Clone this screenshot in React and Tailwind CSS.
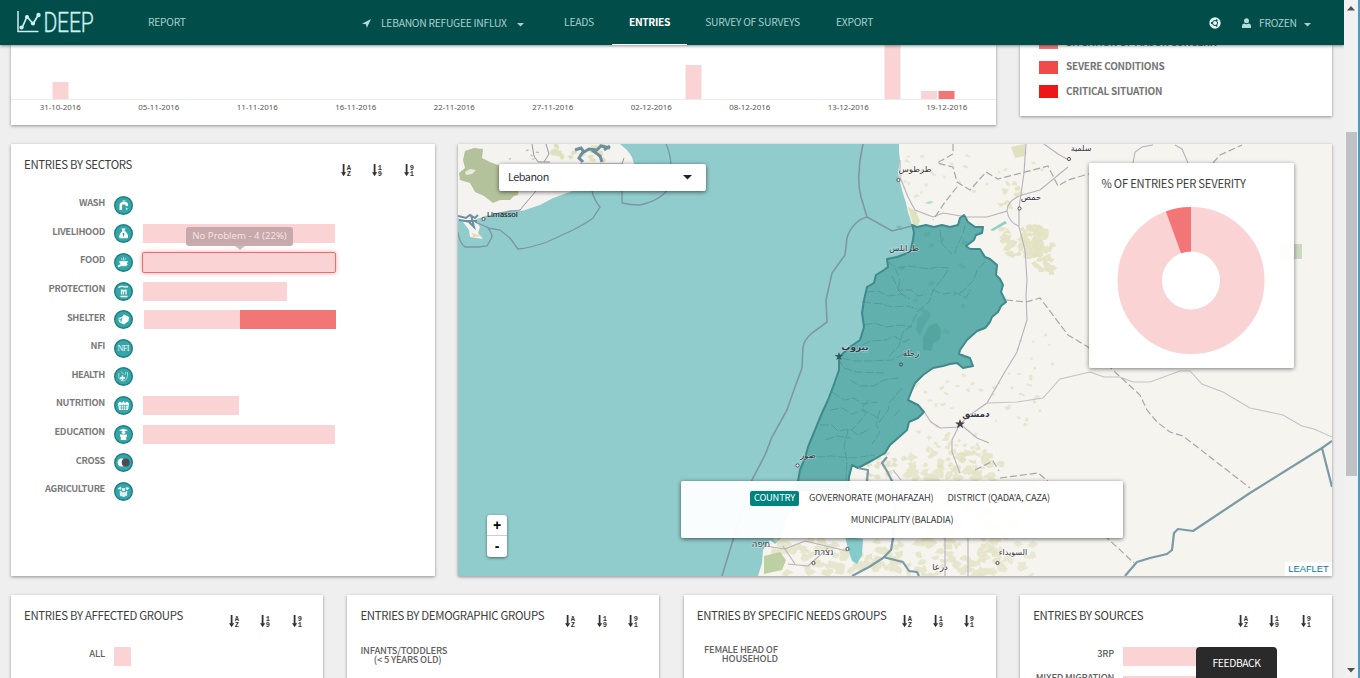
import React from "react";

const PINK = "#fad4d4";
const RED = "#f37676";

function Caret({ className = "" }) {
  return (
    <svg className={className} width="7" height="4" viewBox="0 0 7 4">
      <path d="M0 0h7L3.5 3.6z" fill="currentColor" />
    </svg>
  );
}

function Header() {
  return (
    <header className="relative z-20 flex h-[45px] shrink-0 bg-[#004d4a] text-[10.300px] leading-[43px] tracking-[-0.260px] whitespace-nowrap text-[#a9d0ce] shadow-[0_1px_3px_rgba(0,0,0,0.45)]">
      <div className="w-[148px] shrink-0">
        <svg width="148" height="44" viewBox="0 0 148 44">
          <path d="M18 11v20.5h20.5" fill="none" stroke="#cdf0f0" strokeWidth="1.5" />
          <path d="M22 28l5-11.500 6 7.200 5.500-9" fill="none" stroke="#cdf0f0" strokeWidth="1.700" />
          <circle cx="21.500" cy="27.500" r="2.100" fill="#cdf0f0" />
          <circle cx="27" cy="17" r="2.100" fill="#cdf0f0" />
          <circle cx="33" cy="23.500" r="2.100" fill="#cdf0f0" />
          <circle cx="38.500" cy="15" r="2.200" fill="#cdf0f0" />
          <text x="43.500" y="31.800" fontSize="27" textLength="50" lengthAdjust="spacingAndGlyphs" fill="#cdf0f0" stroke="#cdf0f0" strokeWidth=".35" className="font-['Roboto','Liberation_Sans',sans-serif] font-light">
            DEEP
          </text>
        </svg>
      </div>
      <div className="w-[214px] shrink-0">REPORT</div>
      <div className="flex h-[45px] w-[184px] shrink-0 items-center">
        <svg width="9" height="9" viewBox="0 0 9 9" className="mt-[1px] mr-[10px]">
          <path d="M9 0L0 4.800l4 .4L4.800 9z" fill="#b5dcda" />
        </svg>
        <span className="w-[136px]">LEBANON REFUGEE INFLUX</span>
        <Caret className="mt-[4px]" />
      </div>
      <div className="w-[66px] shrink-0 text-center">LEADS</div>
      <div className="h-[45px] w-[75px] shrink-0 border-b border-white text-center font-bold tracking-[-0.400px] text-white">ENTRIES</div>
      <div className="w-[131px] shrink-0 text-center">SURVEY OF SURVEYS</div>
      <div className="w-[73px] shrink-0 text-center">EXPORT</div>
      <div className="flex-1" />
      <div className="flex h-[45px] w-[135px] shrink-0 items-center">
        <svg width="12" height="12" viewBox="0 0 12 12" className="mt-[1px] mr-[21px]">
          <circle cx="6" cy="6" r="5.700" fill="#e4f4f3" />
          <circle cx="6" cy="6" r="2.500" fill="none" stroke="#004d4a" strokeWidth="1" />
          <circle cx="2.700" cy="6" r=".9" fill="#004d4a" />
          <circle cx="7.700" cy="3.200" r=".9" fill="#004d4a" />
          <circle cx="7.700" cy="8.800" r=".9" fill="#004d4a" />
        </svg>
        <svg width="9" height="10" viewBox="0 0 9 10" className="mt-[1px] mr-[8px]">
          <circle cx="4.500" cy="2.700" r="2.500" fill="#b5dcda" />
          <path d="M0 10V8q0-2.300 2.200-2.600Q4.500 7 6.800 5.400 9 5.700 9 8v2z" fill="#b5dcda" />
        </svg>
        <span className="w-[45px]">FROZEN</span>
        <Caret className="mt-[4px]" />
      </div>
    </header>
  );
}

const dates = ["31-10-2016", "05-11-2016", "11-11-2016", "16-11-2016", "22-11-2016", "27-11-2016", "02-12-2016", "08-12-2016", "13-12-2016", "19-12-2016"];

const cardShadow = "bg-white shadow-[0_1px_3px_rgba(0,0,0,0.4)]";

function Timeline() {
  return (
    <section className={"h-[80px] w-[985px] " + cardShadow}>
      <svg width="985" height="55" viewBox="11 45 985 55" className="block">
        <rect x="11" y="99" width="985" height="1" fill="#ebebeb" />
        <rect x="52.500" y="82" width="16" height="17" fill={PINK} />
        <rect x="685.500" y="65" width="16" height="34" fill={PINK} />
        <rect x="884.500" y="40" width="16" height="59" fill={PINK} />
        <rect x="921" y="91" width="16" height="8" fill={PINK} />
        <rect x="938.500" y="91" width="16" height="8" fill={RED} />
      </svg>
      <div className="grid grid-cols-10 text-center font-['Noto_Sans',sans-serif] text-[7.900px] leading-[14px] text-[#555]">
        {dates.map((d) => (
          <span key={d}>{d}</span>
        ))}
      </div>
    </section>
  );
}

function Legend() {
  const rows = [
    ["SITUATION OF MAJOR CONCERN", "bg-[#f37676]"],
    ["SEVERE CONDITIONS", "bg-[#f14a4a]"],
    ["CRITICAL SITUATION", "bg-[#ec1717]"],
  ];
  return (
    <section className={"h-[71px] w-[312px] " + cardShadow}>
      <div className="-mt-[14px] flex flex-col pl-[19px]">
        {rows.map(([t, c]) => (
          <div key={t} className="flex h-[24.300px] items-center">
            <span className={"mr-[8px] h-[12.500px] w-[19px] " + c} />
            <span className="-mt-[2px] text-[10px] leading-[14px] font-bold tracking-[-0.250px] text-[#757575]">{t}</span>
          </div>
        ))}
      </div>
    </section>
  );
}

function SortIcon({ a, b }) {
  return (
    <svg width="11" height="13" viewBox="0 0 11 13">
      <path d="M2.600 0v10" stroke="#333" strokeWidth="1.800" />
      <path d="M0 8.300h5.200L2.600 12.300z" fill="#333" />
      <text x="5.800" y="5.500" fontSize="7" fill="#333" className="font-['Liberation_Mono',monospace] font-bold">{a}</text>
      <text x="5.800" y="12" fontSize="7" fill="#333" className="font-['Liberation_Mono',monospace] font-bold">{b}</text>
    </svg>
  );
}

function CardHead({ title }) {
  return (
    <div className="flex justify-between pr-[20.500px] pl-[13px]">
      <h2 className="mt-[10.500px] text-[11.400px] leading-[18px] tracking-[-0.310px] whitespace-nowrap text-[#3c3c3c]">{title}</h2>
      <div className="mt-[20px] flex gap-[20.300px]">
        <SortIcon a="A" b="Z" />
        <SortIcon a="1" b="9" />
        <SortIcon a="9" b="1" />
      </div>
    </div>
  );
}

const glyphs = {
  WASH: <path d="M5.500 14V9.500Q5.500 6 9 6h2.500q2.500 0 2.500 3v1h-2.500V8.500H9q-1 0-1 1V14zM8.500 4.500h3v1h-3zM12.800 11.300q1.500 2 0 3-1.500-1 0-3" fill="#fff" />,
  LIVELIHOOD: (
    <g>
      <path d="M7.500 4.500h4l-.8 2.200h-2.400zM8.200 7h2.800q3.500 3.500 3 6.200-.2 1-1.200 1H6.400q-1 0-1.200-1Q5 10.500 8.200 7z" fill="#fff" />
      <path d="M9.500 9v3.500M8.500 10h2" stroke="#279a9b" strokeWidth=".9" />
    </g>
  ),
  FOOD: <path d="M5.500 8.500h8q-.3 2.500-2.500 3h2.500l-1.500 1.300H7L4.500 14l-.5-1 3-2Q5.700 10 5.500 8.500zM7.500 5l.7 2.500M9.500 4v3.500M11.500 5l-.7 2.500" fill="#fff" stroke="#fff" strokeWidth=".6" />,
  PROTECTION: <path d="M4.500 5.500q3-2 6-.6h3.500M6.500 14.500h7M7.500 7.500v5M9.500 8.500v4M12 7.500v5M7 8.500h5.500" fill="none" stroke="#fff" strokeWidth="1.300" />,
  SHELTER: (
    <g>
      <path d="M4.500 8l3.500-1 2-2.500 5 2.500-.5 4-4.500 3.500-5-2.500z" fill="#fff" />
      <path d="M5 8.800l2.200 1.200-.5 2M8 7.500l-1 3" stroke="#279a9b" strokeWidth=".8" fill="none" />
    </g>
  ),
  NFI: <text x="9.500" y="12.300" fontSize="8" textLength="12" textAnchor="middle" fill="#fff" className="font-['Liberation_Serif',serif]">NFI</text>,
  HEALTH: (
    <g fill="none" stroke="#fff">
      <path d="M5 6q-.5 3 0 5 1.500 3.500 5 3 3.500-1.500 3.500-5.500V5" strokeWidth=".8" opacity=".7" />
      <path d="M8.500 8.500v5M6 11h5" strokeWidth="1.700" />
      <path d="M7 4.500L9.500 7M12 5l-1 3" strokeWidth=".8" opacity=".7" />
    </g>
  ),
  NUTRITION: (
    <g>
      <path d="M4 7.500l2-2 2 1.500 1.500-2 1.500 2 2-1.500 2 2-1 6.500H5z" fill="#fff" />
      <path d="M5 9.700h9M5.500 12h8M7.600 8.500V14M9.600 8.500V14M11.600 8.500V14" stroke="#279a9b" strokeWidth=".6" />
    </g>
  ),
  EDUCATION: <path d="M5 5.200L9.500 3.700 14 5.200 9.500 6.800zM7.700 6.800h3.600v1.500q-1.800 1.500-3.600 0zM6 9.500h7v2.200h-.8V15H6.800v-3.300H6z" fill="#fff" />,
  CROSS: (
    <g>
      <circle cx="7.700" cy="9.500" r="4" fill="#fff" />
      <circle cx="11.700" cy="9.500" r="4" fill="#4c4c52" />
    </g>
  ),
  AGRICULTURE: <path d="M4 6.500L7 5l-.5 2.500zM8 6.500h3L10.500 9h-2zM12 5.500l3 .5-2 2zM6 9l1.800 1v4H6.500zM13 9l-1.500 1v4h1zM8.500 10.500h2.200v4H8.500z" fill="#fff" stroke="#fff" strokeWidth=".5" />,
};

function SectorIcon({ name }) {
  return (
    <svg width="19" height="19" viewBox="0 0 19 19" className="mr-[10px] ml-[9px] shrink-0">
      <circle cx="9.500" cy="9.500" r="8.800" fill="#35a5a7" stroke="#187f82" strokeWidth="1.400" />
      {glyphs[name]}
    </svg>
  );
}

const sectors = [
  ["WASH", 0, 0],
  ["LIVELIHOOD", 192, 0],
  ["FOOD", 192, 0],
  ["PROTECTION", 144, 0],
  ["SHELTER", 96, 96],
  ["NFI", 0, 0],
  ["HEALTH", 0, 0],
  ["NUTRITION", 96, 0],
  ["EDUCATION", 192, 0],
  ["CROSS", 0, 0],
  ["AGRICULTURE", 0, 0],
];

function Sectors() {
  return (
    <section className={"h-[432px] w-[424px] " + cardShadow}>
      <CardHead title="ENTRIES BY SECTORS" />
      <div className="mt-[14px] flex flex-col">
        {sectors.map(([n, a, b]) => (
          <div key={n} className="flex h-[28.600px] items-center">
            <span className="-mt-[6px] w-[94px] text-right text-[9.300px] leading-[14px] font-bold tracking-[-0.350px] text-[#7a7a7a]">{n}</span>
            <SectorIcon name={n} />
            <div className={"relative flex h-[19px] " + (b ? "ml-[1px] " : "") + (n === "FOOD" ? "rounded-[1px] shadow-[0_0_5px_1px_#f9a5a5] outline-[1.500px] outline-[#ee6d6d]" : "")}>
              <span className="bg-[#fad4d4]" style={{ width: a }} />
              <span className="bg-[#f37676]" style={{ width: b }} />
              {n === "FOOD" && (
                <div className="absolute -top-[26px] left-[43px] z-10 h-[19px] w-[107px] rounded-[3px] bg-[#c4a7a9]/95 text-center font-['Noto_Sans',sans-serif] text-[9.600px] leading-[18px] whitespace-nowrap text-[#f6e3e3]">
                  No Problem - 4 (22%)
                  <svg width="10" height="5" viewBox="0 0 10 5" className="absolute top-[19px] left-[49px]">
                    <path d="M0 0h10L5 4z" fill="#c9b9bf" />
                  </svg>
                </div>
              )}
            </div>
          </div>
        ))}
      </div>
    </section>
  );
}

function scatter(seed, n, x0, y0, w, h, size) {
  let s = seed;
  const r = () => {
    s = (s * 16807) % 2147483647;
    return s / 2147483647;
  };
  let d = "";
  for (let i = 0; i < n; i++) {
    const cx = x0 + r() * w;
    const cy = y0 + r() * h;
    const k = 7;
    for (let j = 0; j < k; j++) {
      const t = (j / k) * Math.PI * 2;
      const q = size * (0.3 + r());
      d += (j ? "L" : "M") + (cx + Math.cos(t) * q * 1.3).toFixed(1) + " " + (cy + Math.sin(t) * q).toFixed(1);
    }
    d += "z";
  }
  return d;
}

const COAST =
  "M899 144L899 152 900 160 898 173 902 190 906 203 908 212 912 225 914 232 913 240 910 252 897 257 887 259 888 267 884 270 876 275 874 283 867 287 864 300 862 313 864 327 860 340 850 347 839 357 839 370 833 387 828 400 822 413 815 430 808 447 805 458 800 470 798 481 792 505 785 525 781 538 775 544 770 540 763 550 762 563 758 576H1332V144z";
const LEBANON =
  "M912 225L917 227 926 225 934 227 942 225 950 227 958 225 960 218 964 215 968 222 975 227 983 227 982 233 976 235 974 240 966 246 970 249 980 249 985 257 990 259 997 265 996 275 1000 279 1003 285 1001 292 1006 302 1001 306 998 312 992 317 990 322 985 328 977 331 967 340 960 350 959 354 970 358 973 366 963 368 957 363 950 364 943 366 933 368 923 375 915 383 912 390 908 400 918 405 924 412 918 418 909 422 907 430 898 438 890 445 885 453 873 460 858 468 852 465 849 477 848 490 797 490 798 481 800 470 805 458 808 447 815 430 822 413 828 400 833 387 839 370 839 357 850 347 860 340 864 327 862 313 864 300 867 287 874 283 876 275 884 270 888 267 887 259 897 257 910 252 913 240 914 232z";

const places = [
  ["طرطوس", 915, 171.5, 8.5, 0],
  ["حمص", 1031, 200, 8.5, 0],
  ["طرابلس", 904, 251, 8.5, 0],
  ["بيروت", 855, 350, 9, 1],
  ["زحلة", 911, 356, 8.5, 0],
  ["دمشق", 976, 416.5, 9, 1],
  ["صور", 808, 458, 8.5, 0],
  ["سلمية", 1081, 151, 8, 0],
  ["السويداء", 1013, 555, 8, 0],
  ["درعا", 940, 570, 8.5, 0],
  ["נצרת", 824, 555, 8.5, 0],
  ["חיפה", 761, 547, 8.5, 0],
];

function MapDrawing() {
  return (
    <svg width="874" height="432" viewBox="458 144 874 432" className="block">
      <rect x="458" y="144" width="874" height="432" fill="#90cccb" />
      <path d={COAST} fill="#f5f4ef" />
      <path d="M458 144H620L627 150 632 157 634 164 620 175 567 193 553 198 540 205 522 211 510 210 500 213 485 216 475 220 480 227 478 233 483 239 470 237 469 230 463 222 458 218z" fill="#f5f3ef" />
      <path d="M465 151L474 148 483 149 482 158 490 162 498 165H522L518 195 514 196 510 200 500 200 493 203 484 196 475 192 470 183 460 180 459 173 465 168 463 160z" fill="#b4c29b" />
      <path d="M465 172l5-3 6 1-4 4-6 1z" fill="#e9ebdd" />
      <path d={scatter(41, 14, 555, 146, 50, 16, 3.2)} fill="#dcdfb9" opacity=".9" />
      <path d={scatter(7, 5, 510, 146, 40, 14, 1.2)} fill="#a9cda5" />
      <path d="M575 150l6-2 3 4 5-3 8 1 4-4 9 2M583 152l-4 6 4 4M592 150l8 6 2 6M610 146l-6 4" fill="none" stroke="#6c8f9b" strokeWidth="3" />
      <path d="M532 144l2 12 4 6 12 0M546 144l3 10-5 8M498 213l22-3 10-12 6-7M580 164l42 0 2-6" fill="none" stroke="#9a93a3" strokeWidth="1" />
      <path d="M458 216l8 2 4-3 5 3 3-3M471 215l3 12-6-6 9 0M459 220l12 2" fill="none" stroke="#6c8fa0" strokeWidth="2" />
      <path d="M472 233l10 3-9 1z" fill="#efd9b5" />
      <path d="M592 191Q594 200 600 207L593 218Q585 224 573 230L547 242Q530 248 518 249L510 238 500 230 488 228Q492 233 492 237L487 246 478 247H465Q459 242 458 232M475 222l14 6M666 144Q671 155 671 167 671 185 665 193 655 202 640 205 630 205 622 203V190" fill="none" stroke="#7d95a4" strokeWidth="1.300" />

      <path d={scatter(11, 150, 900, 452, 102, 124, 4.2)} fill="#e0dfbe" opacity=".7" />
      <path d={scatter(67, 40, 925, 432, 60, 40, 2.5)} fill="#e0dfbe" opacity=".7" />
      <path d={scatter(23, 100, 775, 538, 125, 36, 4)} fill="#dfe0bf" opacity=".7" />
      <path d={scatter(29, 45, 985, 480, 50, 96, 4)} fill="#e5e4c8" opacity=".75" />
      <path d={scatter(31, 34, 1003, 226, 36, 32, 4)} fill="#e2e1bf" opacity=".85" />
      <path d={scatter(33, 34, 1026, 228, 26, 44, 4)} fill="#e2e1bf" opacity=".85" />
      <path d={scatter(37, 12, 1000, 178, 26, 30, 2.6)} fill="#e2e1bf" opacity=".85" />
      <path d={scatter(43, 26, 905, 148, 140, 50, 2)} fill="#dfe3c9" opacity=".75" />
      <path d={scatter(47, 34, 915, 375, 125, 60, 2)} fill="#e0e2c6" opacity=".75" />
      <path d={scatter(53, 16, 868, 452, 30, 28, 3)} fill="#dce0be" opacity=".8" />
      <path d={scatter(59, 16, 1000, 330, 60, 70, 1.5)} fill="#e4e4d6" />
      <path d="M1011 147l14-3v12l-10 2zM908 207l8 4 4 10-2 4-5 0z" fill="#e2e1bf" />
      <path d="M764 556l16-4 6 8-4 10-18 4z" fill="#bdd0a4" />
      <path d="M990 230l15-9 2 2-14 8z" fill="#8fcfc9" />
      <path d="M925 203l5-2 4 1-5 2z" fill="#a9dcc9" />
      <rect x="1280" y="244" width="22" height="15" fill="#ccd8c2" />

      <g fill="none" stroke="#b9b0bd" strokeWidth="1.100">
        <path d="M1026 144L1024 173 1019 208 1019 227 1025 250 1027 280 1026 295 1027 320 1017 352 1003 375 987 403 970 415 960 424 952 440 952 452 960 473" />
        <path d="M900 160l0 17 8 20 7 13 18 7 10-4 24 4 20 0 20-6Q1007 200 1022 195L1040 190 1068 167M1007 211q2 12 12 15M960 424l17 14 12 5M960 427l-20 1-9-6-6-9M1044 144l14 10 9 5" />
        <path d="M987 403l30-1 26-4 17-19 30-7 14 5 16 0 13 5h17l30-11h10l12 13 21 8 27 16 33 7 19 11 12 3 18 8" stroke="#c5c2c4" />
        <path d="M1133 163L1135 152 1142 147 1153 145M1175 145l7 4 6 14" />
        <path d="M765 546l20 3 20-8 42 10M783 546l12 18M828 548l-20 18-20-2M893 470l8 10M945 538v38M968 538v38" />
      </g>
      <g fill="none" stroke="#aaa7a8" strokeWidth="1.200" strokeDasharray="7 3">
        <path d="M953 144v10l-16 9 16 4 4 15 13 8 16-18 12 7 50-13 10 20 10-6 24-7M957 187l-12 15-12 18M1006 300l20 2 14-4 28 37 20 12 27 25 25 23 7 15 10 12 13 10 13 4 67 52M1213 163l7-8 22-10M1000 478l38-5 10 8M1104 535l30 28M975 470l18-9 6 10" />
      </g>

      <path d={LEBANON} fill="#62b0ad" />
      <g fill="none" stroke="#468f92" strokeWidth=".8" opacity=".75" strokeDasharray="9 2">
        <path d="M888 262l9 6 12-2 20 3 8-2 12 1-6 10-10 12-4 12-12 10-6 14-8 6-4 14-10 10M965 225l-2 9-6 12-3 10M892 276l4 8 3 6 12 0 7 6 8-2M866 292l12-1 10 5 14-2 8 5M862 302l20 2 10 3 16-1 9 3M864 325l10-2 12 4 14-2 12 2M862 345l10-4 14-1 8-4 10 6 6-3M842 358l12 3 14 0 24-1 20-10M838 358l6 10 12 4 28 1M895 268l5 12-2 10 8 8M985 262l-8 8-3 10-12 12-9 3M932 290l12 4 10-2 12 6 4-8M940 230l2 14 10 10M850 380l10 6 14 0 10-6 14-2M832 392l12 8 10-2 8 6 16-2M830 410l12-2 10 6 12-4 14 8M820 425l12 0 6 6 12-2 8 6 12-6M805 455l16 2 10-1 22 2 22-3M848 430l-4 16 3 14-1 20M825 440l12-4 14 2M868 400l-6 8 4 6-14 16M880 410l-4 14 4 8-8 12M902 388l-12 14-2 8-10 14M900 410l-8 8" />
      </g>
      <path d={scatter(61, 12, 900, 225, 70, 110, 3)} fill="#4b9d98" opacity=".35" />
      <path d="M929 326l8-3 4 7-1 9-6 4-3 8-8-1 0-12z" fill="#44978e" opacity=".45" />
      <path d="M918 318l10-8 3 6-6 8-5 12-4-6z" fill="#44978e" opacity=".35" />
      <path d={LEBANON} fill="none" stroke="#3f8a8d" strokeWidth="2" strokeLinejoin="round" />
      <path d="M863 144L860 160 859 173Q858 185 861 197L867 217 892 231 912 226M867 217Q860 219 856 223 849 230 847 238L845 255 832 273 826 300 827 322 812 333Q804 340 803 347L802 368 795 387 787 410 772 437 765 455 752 480 733 540 722 576" fill="none" stroke="#7f97a5" strokeWidth="1.600" />
      <g fill="none" stroke="#7a9ba5" strokeWidth="2.200" strokeLinejoin="round">
        <path d="M1125 576L1137 562 1150 558 1167 554 1172 550 1174 533 1178 529 1193 531 1250 493 1322 448 1332 441M1322 448l10 39" />
        <path d="M887 457l-5 6 5 8 5 10 3 30-2 27-2 12-8 8-14 9-17 9M883 557l20 5 6 9 8 1 2 4M858 468l10 2-1 11" />
      </g>
      <path d="M845 536l18 3-1 16-5 9-5-3-4-12z" fill="#86cbcb" />

      <g fill="#f5f4ef" stroke="#55505c" strokeWidth="1">
        <circle cx="898.500" cy="180" r="1.600" />
        <circle cx="1019.500" cy="208.500" r="1.600" />
        <circle cx="1069" cy="159" r="1.600" />
        <circle cx="797.500" cy="465.500" r="1.600" />
        <circle cx="813.500" cy="563" r="1.600" />
        <circle cx="847.500" cy="549" r="1.600" />
        <circle cx="997.500" cy="563" r="1.600" />
        <circle cx="483.500" cy="219" r="1.600" />
        <circle cx="901" cy="364.500" r="1.600" fill="none" />
      </g>
      <path d="M960 419l1.300 3.500h3.700l-3 2.200 1.200 3.600-3.200-2.200-3.200 2.200 1.200-3.600-3-2.200h3.700z" fill="#444" />
      <path d="M839 352l1.100 3.100h3.200l-2.600 1.900 1 3.100-2.700-1.900-2.700 1.900 1-3.100-2.600-1.900h3.200z" fill="#37575c" />
      <g fill="#3b3744" textAnchor="middle" className="font-['DejaVu_Sans',sans-serif]">
        {places.map(([t, x, y, s, b]) => (
          <text key={t} x={x} y={y} fontSize={s} fontWeight={b ? 700 : 400} stroke="#ffffff" strokeOpacity=".35" strokeWidth="1.500" paintOrder="stroke">
            {t}
          </text>
        ))}
      </g>
      <text x="487" y="217" fontSize="7.500" fill="#222" stroke="#222" strokeWidth=".15" className="font-['Noto_Sans',sans-serif]">Limassol</text>
    </svg>
  );
}

function MapCard() {
  return (
    <section className={"relative h-[432px] w-[874px] " + cardShadow}>
      <MapDrawing />
      <div className="absolute top-[19.500px] left-[40.500px] flex h-[27px] w-[207px] items-center justify-between rounded-[2px] bg-white pr-[14px] pl-[9.500px] text-[10.800px] leading-[20px] tracking-[-0.450px] text-[#333] shadow-[0_1px_4px_rgba(0,0,0,0.6)]">
        <span className="-mt-[2px]">Lebanon</span>
        <svg width="9" height="5" viewBox="0 0 9 5">
          <path d="M0 0h9L4.500 4.500z" fill="#222" />
        </svg>
      </div>
      <div className="absolute top-[19px] left-[631px] h-[205px] w-[205px] rounded-[2px] bg-white/95 shadow-[0_1px_4px_rgba(0,0,0,0.5)]">
        <h2 className="mt-[10.500px] pl-[12.500px] text-[11.200px] leading-[18px] tracking-[-0.220px] whitespace-nowrap text-[#3c3c3c]">% OF ENTRIES PER SEVERITY</h2>
        <svg width="205" height="150" viewBox="0 0 205 150" className="mt-[13.500px] block">
          <circle cx="102" cy="75.500" r="51.250" fill="none" stroke={PINK} strokeWidth="44.500" />
          <path d="M102 2A73.500 73.500 0 0 0 76.860 6.430L92.080 48.250A29 29 0 0 1 102 46.500z" fill={RED} />
        </svg>
      </div>
      <div className="absolute top-[371px] left-[29px] flex h-[42px] w-[20px] flex-col rounded-[3px] bg-white text-center font-['Liberation_Sans',sans-serif] text-[14px] leading-[21px] font-bold text-black shadow-[0_1px_3px_rgba(0,0,0,0.5)]">
        <span className="h-[21px] border-b border-[#ccc]">+</span>
        <span className="h-[21px]">-</span>
      </div>
      <div className="absolute top-[337px] left-[223px] flex h-[57px] w-[442px] flex-wrap content-start justify-center gap-x-[6px] gap-y-[7px] rounded-[2px] bg-white/95 px-[60px] pt-[10px] text-[9.300px] leading-[15px] tracking-[-0.200px] text-[#3c3c3c] shadow-[0_1px_4px_rgba(0,0,0,0.6)]">
        <span className="h-[15px] rounded-[2px] bg-[#00837f] px-[4px] leading-[13px] text-white">COUNTRY</span>
        <span className="h-[15px] px-[4px] leading-[13px]">GOVERNORATE (MOHAFAZAH)</span>
        <span className="h-[15px] px-[4px] leading-[13px]">DISTRICT (QADA'A, CAZA)</span>
        <span className="h-[15px] px-[4px] leading-[13px]">MUNICIPALITY (BALADIA)</span>
      </div>
      <div className="absolute right-0 bottom-0 h-[14px] w-[47px] bg-white/80 text-center font-['Liberation_Sans',sans-serif] text-[9.300px] leading-[14px] text-[#0078a8]">LEAFLET</div>
    </section>
  );
}

function SmallCard({ title, children }) {
  return (
    <section className={"h-[120px] w-[312px] shrink-0 " + cardShadow}>
      <CardHead title={title} />
      <div className="mt-[19px] flex flex-col">{children}</div>
    </section>
  );
}

function GroupRow({ lines, children, lift = "-mt-[7px]" }) {
  return (
    <div className="flex h-[19px] items-center">
      <div className={"mr-[9px] flex w-[94px] flex-col items-end text-[9.400px] leading-[9px] font-medium tracking-[-0.220px] whitespace-nowrap text-[#606060] " + lift}>
        {lines.map((l) => (
          <span key={l}>{l}</span>
        ))}
      </div>
      {children}
    </div>
  );
}

function Scrollbar() {
  return (
    <div className="flex w-[16px] shrink-0 flex-col items-center border-r-2 border-[#4d9cc6] bg-[#f1f1f1]">
      <svg width="8" height="5" viewBox="0 0 8 5" className="mt-[6px]">
        <path d="M0 4.500h8L4 0z" fill="#505050" />
      </svg>
      <div className="mt-[121px] h-[344px] w-[11px] bg-[#bfc1c4]" />
      <div className="flex-1" />
      <svg width="8" height="5" viewBox="0 0 8 5" className="mb-[5px]">
        <path d="M0 0h8L4 4.500z" fill="#505050" />
      </svg>
    </div>
  );
}

export default function App() {
  return (
    <div className="flex h-[678px] w-[1360px] overflow-hidden bg-[#efefef] font-['Noto_Sans_CJK_SC','Noto_Sans',sans-serif]">
      <div className="relative flex h-[678px] w-[1344px] flex-col overflow-hidden">
        <Header />
        <main className="flex flex-col pl-[11px]">
          <div className="flex h-[99px] items-start gap-[24px]">
            <Timeline />
            <Legend />
          </div>
          <div className="flex h-[451px] items-start gap-[23px]">
            <Sectors />
            <MapCard />
          </div>
          <div className="flex gap-[24.400px]">
            <SmallCard title="ENTRIES BY AFFECTED GROUPS">
              <GroupRow lines={["ALL"]}>
                <span className="h-[19px] w-[17px] bg-[#fad4d4]" />
              </GroupRow>
            </SmallCard>
            <SmallCard title="ENTRIES BY DEMOGRAPHIC GROUPS">
              <div className="-mt-[1px] flex h-[19px] flex-col pl-[13px] text-[9.400px] leading-[9px] font-medium tracking-[-0.220px] whitespace-nowrap text-[#606060]">
                <span>INFANTS/TODDLERS</span>
                <span className="w-[81px] text-right">(&lt; 5 YEARS OLD)</span>
              </div>
            </SmallCard>
            <SmallCard title="ENTRIES BY SPECIFIC NEEDS GROUPS">
              <GroupRow lines={["FEMALE HEAD OF", "HOUSEHOLD"]} lift="-mt-[5px]" />
            </SmallCard>
            <SmallCard title="ENTRIES BY SOURCES">
              <GroupRow lines={["3RP"]}>
                <span className="h-[19px] w-[150px] bg-[#fad4d4]" />
              </GroupRow>
              <div className="h-[10px]" />
              <GroupRow lines={["MIXED MIGRATION"]} lift="-mt-[16px]">
                <span className="h-[19px] w-[120px] bg-[#fad4d4]" />
              </GroupRow>
            </SmallCard>
          </div>
        </main>
        <button className="absolute bottom-0 left-[1196px] z-30 h-[31px] w-[81px] rounded-t-[4px] bg-[#2a2a2a] text-[10.300px] leading-[31px] tracking-[-0.400px] text-white">FEEDBACK</button>
      </div>
      <Scrollbar />
    </div>
  );
}
